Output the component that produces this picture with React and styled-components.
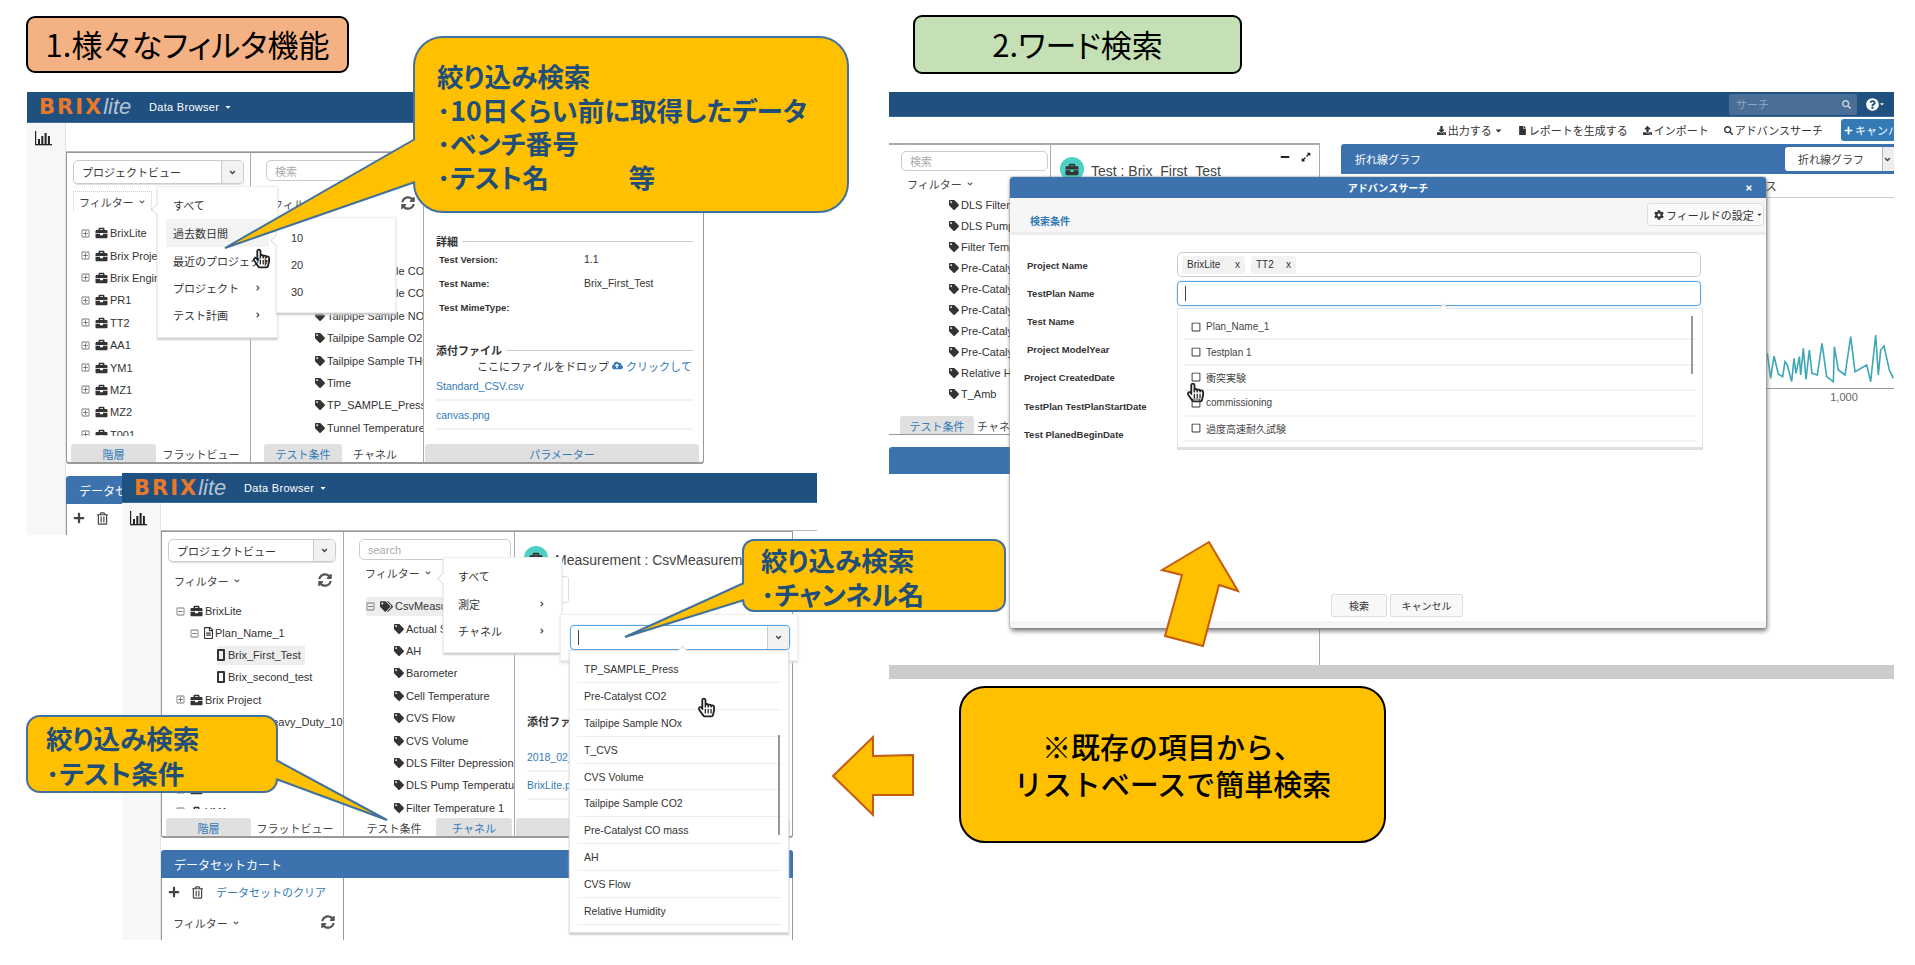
import styled, { createGlobalStyle, css } from "styled-components";
import {
  FaAngleDown,
  FaAngleRight,
  FaBriefcase,
  FaCaretDown,
  FaCloudUploadAlt,
  FaCog,
  FaDownload,
  FaExpandAlt,
  FaFile,
  FaMinus,
  FaPlus,
  FaQuestionCircle,
  FaRegFileAlt,
  FaRegHandPointer,
  FaRegMinusSquare,
  FaRegPlusSquare,
  FaRegSquare,
  FaRegTrashAlt,
  FaSearch,
  FaSyncAlt,
  FaTag,
  FaTags,
  FaTimes,
  FaUpload,
} from "react-icons/fa";

const UI_FONT = `"Liberation Sans", "Noto Sans CJK JP", sans-serif`;
const SLIDE_FONT = `"Noto Sans CJK JP", "Liberation Sans", sans-serif`;

const GlobalStyle = createGlobalStyle`
  html, body { margin: 0; padding: 0; background: #fff; }
  body { font-family: ${UI_FONT}; font-size: 11px; color: #333; }
`;

const place = css`
  position: absolute;
  left: ${(p) => p.$x}px;
  top: ${(p) => p.$y}px;
`;

const Slide = styled.div`
  position: relative;
  width: 1915px;
  height: 965px;
  overflow: hidden;
  background: #fff;
`;

/* slide furniture */
const Caption = styled.div`
  ${place}
  box-sizing: border-box;
  width: ${(p) => p.$w}px;
  height: ${(p) => p.$h}px;
  padding-bottom: 3px;
  display: flex;
  align-items: center;
  justify-content: center;
  background: ${(p) => p.$bg};
  border: 2px solid #000;
  border-radius: 9px;
  color: #000;
  font-family: ${SLIDE_FONT};
  font-feature-settings: "palt";
  font-size: ${(p) => p.$size}px;
`;

const Callout = styled.div`
  ${place}
  box-sizing: border-box;
  width: ${(p) => p.$w}px;
  height: ${(p) => p.$h}px;
  padding: ${(p) => p.$pad};
  background: #ffc000;
  border: 2px solid #41719c;
  border-radius: ${(p) => p.$r}px;
  color: #1f4e79;
  font-family: ${SLIDE_FONT};
  font-feature-settings: "palt";
  font-size: ${(p) => p.$size}px;
  font-weight: 700;
  line-height: ${(p) => p.$lh}px;
  white-space: pre;
`;

const Note = styled.div`
  ${place}
  box-sizing: border-box;
  width: 427px;
  height: 157px;
  display: flex;
  align-items: center;
  justify-content: center;
  background: #ffc000;
  border: 2px solid #000;
  border-radius: 26px;
  color: #000;
  font-family: ${SLIDE_FONT};
  font-size: 29px;
  font-weight: 500;
  line-height: 37px;
  text-align: center;
`;

const Annotations = styled.svg`
  position: absolute;
  left: 0;
  top: 0;
  pointer-events: none;
`;

const Hand = styled(FaRegHandPointer)`
  ${place}
  width: 17px;
  height: 23px;
  color: #222;
  z-index: 5;
`;

/* app window */
const Window = styled.div`
  ${place}
  width: ${(p) => p.$w}px;
  height: ${(p) => p.$h}px;
  background: #fff;
  overflow: hidden;
  isolation: isolate;
  display: flex;
  flex-direction: column;
`;

const TopBar = styled.div`
  flex: none;
  height: ${(p) => p.$h}px;
  box-sizing: border-box;
  display: flex;
  align-items: center;
  padding: 0 12px;
  background: #20507f;
  border-bottom: 1px solid #3a6c9e;
  color: #fff;
`;

const Logo = styled.div`
  display: flex;
  align-items: center;
  width: 110px;
`;

const LogoMark = styled.span`
  color: #e8792b;
  font-family: "DejaVu Sans", sans-serif;
  font-weight: 700;
  font-size: 21px;
  letter-spacing: 2px;
`;

const LogoLite = styled.span`
  color: #b4c2d2;
  font-family: "Liberation Sans", sans-serif;
  font-style: italic;
  font-size: 22px;
`;

const BarMenu = styled.div`
  display: flex;
  align-items: center;
  gap: 5px;
  font-size: 11px;
  letter-spacing: 0.3px;
  svg { width: 8px; height: 8px; }
`;

const Desk = styled.div`
  flex: 1;
  min-height: 0;
  display: flex;
`;

const Gutter = styled.div`
  flex: none;
  width: 39px;
  padding: 7px 0 0 8px;
  box-sizing: border-box;
  background: #f7f7f7;
  border-right: 1px solid #e4e4e4;
`;

const Work = styled.div`
  flex: 1;
  min-width: 0;
`;

const HeadRule = styled.div`
  height: ${(p) => p.$h}px;
  border-bottom: 1px solid #bbb;
`;

const Panel = styled.div`
  box-sizing: border-box;
  width: ${(p) => p.$w}px;
  height: ${(p) => p.$h}px;
  display: flex;
  border: 1px solid #999;
  border-bottom-width: 2px;
  border-radius: 0 0 3px 3px;
`;

const Pane = styled.div`
  box-sizing: border-box;
  flex: ${(p) => (p.$w ? `0 0 ${p.$w}px` : "1")};
  min-width: 0;
  display: flex;
  flex-direction: column;
  border-right: ${(p) => (p.$w ? "1px solid #aaa" : "none")};
`;

const PaneBody = styled.div`
  flex: 1;
  min-height: 0;
  overflow: hidden;
  position: relative;
  padding-top: 7px;
`;

const PaneTabs = styled.div`
  flex: none;
  height: 18px;
  display: flex;
  padding: 0 ${(p) => p.$pad}px;
`;

const Tab = styled.div`
  flex: 0 0 ${(p) => p.$w}px;
  box-sizing: border-box;
  padding-top: 2px;
  display: flex;
  align-items: center;
  justify-content: center;
  border-radius: 3px 3px 0 0;
  font-size: 11px;
  background: ${(p) => (p.$on ? "#e0e0e0" : "transparent")};
  color: ${(p) => (p.$on ? "#337ab7" : "#444")};
`;

const Select = styled.div`
  box-sizing: border-box;
  width: ${(p) => p.$w}px;
  height: ${(p) => p.$h}px;
  margin-left: 6px;
  display: flex;
  align-items: center;
  border: 1px solid #ccc;
  border-radius: 5px;
  padding-left: 8px;
  font-size: 11px;
  box-shadow: 0 1px 1px #ddd;
`;

const SelectLabel = styled.span`
  flex: 1;
`;

const SelectCaret = styled.span`
  flex: 0 0 21px;
  align-self: stretch;
  display: flex;
  align-items: center;
  justify-content: center;
  background: #f2f2f2;
  border-left: 1px solid #ccc;
  border-radius: 0 4px 4px 0;
  color: #444;
`;

const SearchBox = styled.div`
  box-sizing: border-box;
  width: 152px;
  height: 21px;
  margin-left: 15px;
  display: flex;
  align-items: center;
  padding-left: 8px;
  border: 1px solid #ccc;
  border-radius: 5px;
  color: #aaa;
  font-size: 11px;
`;

const FilterRow = styled.div`
  box-sizing: border-box;
  display: flex;
  align-items: center;
  justify-content: space-between;
  height: 20px;
  margin: ${(p) => p.$m};
  font-size: 11px;
  color: #444;
`;

const FilterText = styled.span`
  display: inline-flex;
  align-items: center;
  gap: 4px;
  padding: 0 5px;
  height: 20px;
  box-sizing: border-box;
  width: ${(p) => (p.$open ? "79px" : "auto")};
  border: ${(p) => (p.$open ? "1px dotted #ccc" : "1px solid transparent")};
  border-bottom: none;
  svg { width: 8px; height: 8px; color: #666; }
`;

const Refresh = styled(FaSyncAlt)`
  width: 14px;
  height: 14px;
  color: #555;
`;

const Tree = styled.div`
  margin-top: ${(p) => p.$top}px;
  height: ${(p) => (p.$clip ? `${p.$clip}px` : "auto")};
  flex: ${(p) => (p.$fill ? "1" : "none")};
  overflow: hidden;
`;

const Row = styled.div`
  height: ${(p) => p.$h}px;
  display: flex;
  align-items: center;
  white-space: nowrap;
  padding-left: ${(p) => p.$indent}px;
  font-size: 11px;
  color: #333;
`;

const Node = styled.span`
  display: inline-flex;
  align-items: center;
  gap: ${(p) => p.$gap ?? 3}px;
  height: 19px;
  padding-right: 4px;
  background: ${(p) => (p.$on ? "#eee" : "transparent")};
  svg { flex: none; }
`;

const plusMinus = css`
  width: 9px;
  height: 9px;
  color: #777;
  margin-right: 3px;
  flex: none;
`;
const PlusBox = styled(FaRegPlusSquare)`${plusMinus}`;
const MinusBox = styled(FaRegMinusSquare)`${plusMinus}`;

const Case = styled(FaBriefcase)`
  width: 13px;
  height: 12px;
  color: #333;
`;
const Doc = styled(FaRegFileAlt)`
  width: 9px;
  height: 12px;
  color: #333;
`;
const TagIcon = styled(FaTag)`
  width: 10px;
  height: 10px;
  color: #333;
`;
const TagsIcon = styled(FaTags)`
  width: 13px;
  height: 11px;
  color: #333;
`;
const TestGlyph = styled.span`
  display: inline-block;
  box-sizing: border-box;
  width: 8px;
  height: 12px;
  border: 2px solid #333;
  border-radius: 1px;
`;

/* overlay menus */
const Menu = styled.div`
  ${place}
  box-sizing: border-box;
  width: ${(p) => p.$w}px;
  height: ${(p) => p.$h}px;
  padding: ${(p) => p.$pad}px 8px 0;
  background: #fff;
  border: 1px solid #eee;
  box-shadow: 0 2px 2px #ccc;
  z-index: 3;
  &::before {
    content: "";
    position: absolute;
    left: -5px;
    top: ${(p) => p.$nub}px;
    width: 8px;
    height: 8px;
    background: #fff;
    border-left: 1px solid #ddd;
    border-bottom: 1px solid #ddd;
    transform: rotate(45deg);
  }
`;

const MenuItem = styled.div`
  height: ${(p) => p.$h}px;
  display: flex;
  align-items: center;
  justify-content: space-between;
  padding: 0 7px 0 ${(p) => p.$left ?? 7}px;
  font-size: 11px;
  color: #333;
  white-space: nowrap;
  overflow: hidden;
  background: ${(p) => (p.$on ? "#f3f3f3" : "transparent")};
  svg { width: 8px; height: 8px; color: #555; flex: none; }
`;

/* right detail column */
const Detail = styled.div`
  padding: ${(p) => p.$pad};
`;

const Legend = styled.div`
  display: flex;
  align-items: center;
  gap: 4px;
  font-size: 11px;
  font-weight: 700;
  color: #333;
  margin-top: ${(p) => p.$top ?? 0}px;
  margin-bottom: ${(p) => p.$after ?? 0}px;
  &::after {
    content: "";
    flex: 1;
    height: 1px;
    background: #ccc;
  }
`;

const Field = styled.div`
  display: grid;
  grid-template-columns: 145px 1fr;
  height: 24px;
  margin-left: 3px;
  align-items: center;
  font-size: 9.5px;
  font-weight: 700;
  color: #333;
  span + span { font-weight: 400; font-size: 10.5px; }
`;

const DropHint = styled.div`
  display: flex;
  align-items: center;
  gap: 3px;
  padding-left: 41px;
  height: 15px;
  font-size: 11px;
  white-space: nowrap;
  overflow: hidden;
  a { color: #337ab7; }
  svg { color: #337ab7; width: 11px; height: 11px; }
`;

const FileLink = styled.div`
  height: ${(p) => p.$h ?? 27}px;
  display: flex;
  align-items: center;
  border-bottom: 2px solid #f2f2f2;
  color: #337ab7;
  font-size: 10.5px;
  white-space: nowrap;
  overflow: hidden;
`;

const AvatarFrame = styled.span`
  flex: none;
  width: 24px;
  height: ${(p) => p.$h}px;
  margin-top: ${(p) => p.$top}px;
  overflow: hidden;
`;

const Avatar = styled.span`
  width: 24px;
  height: 24px;
  border-radius: 50%;
  background: #4fd0c7;
  display: flex;
  align-items: center;
  justify-content: center;
  svg { width: 14px; height: 13px; color: #333; }
`;

const TitleRow = styled.div`
  display: flex;
  align-items: flex-start;
  gap: 7px;
  padding-left: ${(p) => p.$pad}px;
  font-size: 14px;
  color: #444;
  white-space: nowrap;
`;

const TitleText = styled.span`
  line-height: 18px;
  margin-top: ${(p) => p.$top}px;
`;

const GhostButton = styled.div`
  position: absolute;
  left: 15px;
  top: 44px;
  width: 37px;
  height: 25px;
  border: 1px solid #ddd;
  border-radius: 3px;
`;

/* cart block under the panel */
const CartHeader = styled.div`
  box-sizing: border-box;
  width: ${(p) => p.$w}px;
  height: ${(p) => p.$h}px;
  margin-top: ${(p) => p.$top}px;
  display: flex;
  align-items: center;
  padding-left: 13px;
  background: #3c72ae;
  border-radius: 3px 3px 0 0;
  color: #fff;
  font-size: 12px;
  white-space: nowrap;
`;

const CartBody = styled.div`
  display: flex;
  width: ${(p) => p.$w}px;
  height: 70px;
  box-sizing: border-box;
  border-left: 1px solid #999;
  border-right: 1px solid #999;
`;

const CartLeft = styled.div`
  flex: 0 0 182px;
  box-sizing: border-box;
  border-right: 1px solid #999;
  padding: 5px 8px 0 6px;
`;

const CartTools = styled.div`
  display: flex;
  align-items: center;
  gap: 12px;
  height: 18px;
  color: #444;
  a { color: #337ab7; font-size: 11px; margin-left: 1px; }
`;

const ToolPlus = styled(FaPlus)`
  width: 12px;
  height: 12px;
`;
const ToolTrash = styled(FaRegTrashAlt)`
  width: 11px;
  height: 13px;
`;

/* channel picker on the second screen */
const PickerFrame = styled.div`
  ${place}
  box-sizing: border-box;
  width: 238px;
  height: 47px;
  padding: 10px 9px 0;
  background: #fff;
  border: 1px solid #eee;
  box-shadow: 0 2px 3px #ddd;
  z-index: 3;
`;

const FocusInput = styled.div`
  box-sizing: border-box;
  width: ${(p) => p.$w}px;
  height: 25px;
  display: flex;
  align-items: center;
  justify-content: space-between;
  border: 1px solid #5aa5dc;
  border-radius: 4px;
  padding-left: 7px;
  box-shadow: 0 0 2px #a8d0ee;
  &::before {
    content: "";
    width: 1px;
    height: 15px;
    background: #444;
  }
`;

const listNub = css`
  &::before {
    content: "";
    position: absolute;
    left: 50%;
    top: -4px;
    width: 6px;
    height: 6px;
    background: #fff;
    border-left: 1px solid #ddd;
    border-top: 1px solid #ddd;
    transform: rotate(45deg);
  }
`;

const PickerList = styled.div`
  ${place}
  box-sizing: border-box;
  width: 220px;
  height: 283px;
  padding: 5px 7px 0;
  background: #fff;
  border: 1px solid #e4e4e4;
  box-shadow: 0 2px 2px #ccc;
  z-index: 4;
  ${listNub}
`;

const PickerItem = styled.div`
  height: 26.9px;
  box-sizing: border-box;
  display: flex;
  align-items: center;
  padding-left: 7px;
  border-bottom: 1px solid #eee;
  font-size: 10.5px;
  color: #333;
`;

const ScrollThumb = styled.div`
  ${place}
  width: ${(p) => p.$wd ?? 2}px;
  height: ${(p) => p.$len}px;
  background: #999;
  z-index: 5;
`;

/* third screen */
const SearchField = styled.div`
  margin-left: auto;
  box-sizing: border-box;
  width: 128px;
  height: 21px;
  display: flex;
  align-items: center;
  justify-content: space-between;
  padding: 0 6px 0 7px;
  background: #4a6f97;
  border-radius: 2px;
  color: #8fa6bf;
  font-size: 11px;
  svg { width: 9px; height: 9px; color: #c8d3de; }
`;

const HelpIcon = styled.span`
  display: flex;
  align-items: center;
  margin: 0 -3px 0 9px;
  color: #fff;
  svg:first-child { width: 13px; height: 13px; }
  svg:last-child { width: 6px; height: 6px; }
`;

const Toolbar = styled.div`
  flex: none;
  height: 26px;
  box-sizing: border-box;
  display: flex;
  align-items: center;
  justify-content: flex-end;
  gap: 15px;
  font-size: 11px;
  color: #333;
`;

const ToolItem = styled.span`
  display: inline-flex;
  align-items: center;
  gap: 2px;
  svg { width: 9px; height: 9px; color: #333; }
`;

const PrimaryButton = styled.span`
  box-sizing: border-box;
  width: 53px;
  height: 22px;
  display: inline-flex;
  align-items: center;
  gap: 2px;
  padding-left: 3px;
  background: #337ab7;
  border-radius: 3px 0 0 3px;
  color: #fff;
  overflow: hidden;
  white-space: nowrap;
  margin-left: 3px;
  svg { width: 9px; height: 9px; flex: none; }
`;

const SplitView = styled.div`
  flex: none;
  height: 522px;
  display: flex;
`;

const LeftArea = styled.div`
  flex: 0 0 430px;
  box-sizing: border-box;
  border-top: 2px solid #aaa;
  border-right: 1px solid #aaa;
`;

const LeftColumns = styled.div`
  display: flex;
  height: 289px;
  border-bottom: 1px solid #999;
`;

const LeftPane = styled.div`
  flex: ${(p) => (p.$w ? `0 0 ${p.$w}px` : "1")};
  min-width: 0;
  box-sizing: border-box;
  display: flex;
  flex-direction: column;
  border-right: ${(p) => (p.$w ? "1px solid #aaa" : "none")};
  position: relative;
`;

const MiniBox = styled(SearchBox)`
  margin-left: 12px;
  width: 147px;
  height: 20px;
  margin-top: 6px;
`;

const PanelControls = styled.div`
  position: absolute;
  right: 8px;
  top: 7px;
  display: flex;
  gap: 11px;
  color: #222;
  svg { width: 10px; height: 10px; }
`;

const RightArea = styled.div`
  flex: 1;
  min-width: 0;
  padding-left: 21px;
  padding-top: 1px;
`;

const GraphHeader = styled.div`
  height: 30px;
  box-sizing: border-box;
  display: flex;
  align-items: center;
  justify-content: space-between;
  padding-left: 14px;
  background: #3c72ae;
  border-radius: 3px 0 0 0;
  color: #fff;
  font-size: 11px;
`;

const GraphSelect = styled.div`
  width: 110px;
  height: 24px;
  box-sizing: border-box;
  display: flex;
  align-items: center;
  margin-right: -1px;
  background: #fff;
  border-radius: 3px 0 0 3px;
  color: #444;
  padding-left: 13px;
  justify-content: space-between;
  span:last-child {
    width: 12px;
    align-self: stretch;
    display: flex;
    align-items: center;
    background: #eee;
    border-left: 1px solid #bbb;
  }
`;

const GraphTabs = styled.div`
  height: 24px;
  box-sizing: border-box;
  border-bottom: 1px solid #ccc;
  padding-left: 424px;
  display: flex;
  align-items: center;
  font-size: 12px;
  color: #444;
`;

const Chart = styled.svg`
  display: block;
  margin-top: 122px;
`;

const Band = styled.div`
  flex: none;
  height: 14px;
  margin-top: 0;
  background: #ccc;
`;

/* modal */
const Modal = styled.div`
  ${place}
  box-sizing: border-box;
  width: 756px;
  height: 451px;
  display: flex;
  flex-direction: column;
  background: #fff;
  border-radius: 3px;
  box-shadow: 0 0 2px #777, 1px 3px 5px #777;
  z-index: 4;
`;

const ModalHead = styled.div`
  flex: none;
  height: 21px;
  position: relative;
  display: flex;
  align-items: center;
  justify-content: center;
  background: #3c72ae;
  border-radius: 3px 3px 0 0;
  color: #fff;
  font-size: 10px;
  font-weight: 700;
  svg {
    position: absolute;
    right: 13px;
    top: 7px;
    width: 8px;
    height: 8px;
  }
`;

const ModalSub = styled.div`
  flex: none;
  height: 37px;
  box-sizing: border-box;
  display: flex;
  justify-content: space-between;
  padding: 5px 2px 0 20px;
  background: #f6f6f6;
  border-bottom: 3px solid #eee;
`;

const SubTab = styled.div`
  align-self: flex-end;
  padding-bottom: 4px;
  color: #337ab7;
  font-size: 10px;
  font-weight: 700;
`;

const SettingsBtn = styled.div`
  box-sizing: border-box;
  width: 117px;
  height: 23px;
  display: flex;
  align-items: center;
  gap: 2px;
  padding-left: 6px;
  background: #fafafa;
  border: 1px solid #ddd;
  border-radius: 3px;
  font-size: 11px;
  white-space: nowrap;
  svg:first-child { width: 10px; height: 10px; }
  svg:last-child { width: 7px; height: 7px; }
`;

const FormGrid = styled.div`
  flex: 1;
  min-height: 0;
  display: grid;
  grid-template-columns: 167px 1fr;
  padding: 17px 0 0 17px;
`;

const FormLabels = styled.div`
  margin-top: -1px;
`;

const FormLabel = styled.div`
  height: 28.2px;
  display: flex;
  align-items: center;
  margin-left: ${(p) => p.$left ?? 0}px;
  font-size: 9.5px;
  font-weight: 700;
  color: #333;
  white-space: nowrap;
`;

const FormFields = styled.div`
  width: 526px;
  margin-left: -17px;
`;

const ChipInput = styled.div`
  box-sizing: border-box;
  width: 524px;
  height: 25px;
  display: flex;
  align-items: center;
  gap: 6px;
  padding-left: 4px;
  border: 1px solid #ccc;
  border-radius: 5px;
  margin-bottom: 4px;
`;

const Chip = styled.span`
  display: inline-flex;
  align-items: center;
  justify-content: space-between;
  box-sizing: border-box;
  width: ${(p) => p.$w}px;
  height: 18px;
  padding: 0 5px;
  background: #f2f2f2;
  border-radius: 3px;
  font-size: 10px;
`;

const OptionList = styled.div`
  position: relative;
  box-sizing: border-box;
  width: 526px;
  height: 142px;
  margin-top: 2px;
  padding: 6px 6px 0;
  border: 1px solid #e6e6e6;
  border-bottom: 3px solid #ddd;
  ${listNub}
`;

const Option = styled.div`
  height: 25.4px;
  box-sizing: border-box;
  display: flex;
  align-items: center;
  gap: 5px;
  padding-left: 7px;
  border-bottom: 2px solid #f3f3f3;
  font-size: 10px;
  color: #444;
  svg { width: 10px; height: 10px; color: #333; }
`;

const ModalButtons = styled.div`
  flex: none;
  display: flex;
  justify-content: flex-start;
  gap: 3px;
  padding-left: 321px;
  margin-bottom: 4px;
`;

const DialogBtn = styled.div`
  box-sizing: border-box;
  width: ${(p) => p.$w}px;
  height: 23px;
  display: flex;
  align-items: center;
  justify-content: center;
  background: #f8f8f8;
  border: 1px solid #ddd;
  border-radius: 2px;
  font-size: 10px;
`;

const ModalFoot = styled.div`
  flex: none;
  height: 7px;
  background: #f5f5f5;
  border-radius: 0 0 3px 3px;
`;

const BarGlyph = () => (
  <svg width="17" height="16" viewBox="0 0 17 16">
    <rect x="0" y="14" width="17" height="1.3" fill="#222" />
    <rect x="0" y="1" width="1.2" height="14" fill="#222" />
    <rect x="3" y="9" width="2" height="5" fill="#222" />
    <rect x="6.3" y="6" width="2" height="8" fill="#222" />
    <rect x="9.6" y="3" width="2" height="11" fill="#222" />
    <rect x="12.9" y="6" width="2" height="8" fill="#222" />
  </svg>
);

const BrixLogo = () => (
  <Logo>
    <LogoMark>BRIX</LogoMark>
    <LogoLite>lite</LogoLite>
  </Logo>
);

const Down = () => <FaAngleDown size={9} />;

const ProjectNode = ({ name, open }) => (
  <Row $h={22.4} $indent={14}>
    <Node $gap={2}>
      {open ? <MinusBox /> : <PlusBox />}
      <Case />
      {name}
    </Node>
  </Row>
);

const ChannelNode = ({ name, indent }) => (
  <Row $h={22.4} $indent={indent}>
    <Node $gap={2}>
      <TagIcon />
      {name}
    </Node>
  </Row>
);

const screen1Projects = ["BrixLite", "Brix Project", "Brix Engine", "PR1", "TT2", "AA1", "YM1", "MZ1", "MZ2", "T001"];
const screen1Channels = [
  "Actual Speed",
  "AH",
  "Tailpipe Sample CO",
  "Tailpipe Sample CO2",
  "Tailpipe Sample NOx",
  "Tailpipe Sample O2",
  "Tailpipe Sample THC",
  "Time",
  "TP_SAMPLE_Press",
  "Tunnel Temperature",
];
const screen2Channels = [
  "Actual Speed",
  "AH",
  "Barometer",
  "Cell Temperature",
  "CVS Flow",
  "CVS Volume",
  "DLS Filter Depression",
  "DLS Pump Temperature",
  "Filter Temperature 1",
];
const pickerItems = [
  "TP_SAMPLE_Press",
  "Pre-Catalyst CO2",
  "Tailpipe Sample NOx",
  "T_CVS",
  "CVS Volume",
  "Tailpipe Sample CO2",
  "Pre-Catalyst CO mass",
  "AH",
  "CVS Flow",
  "Relative Humidity",
];
const screen3Channels = [
  "DLS Filter Depression",
  "DLS Pump Temperature",
  "Filter Temperature 1",
  "Pre-Catalyst CO",
  "Pre-Catalyst CO2",
  "Pre-Catalyst NOx",
  "Pre-Catalyst O2",
  "Pre-Catalyst THC",
  "Relative Humidity",
  "T_Amb",
];
const formLabels = [
  ["Project Name", 0],
  ["TestPlan Name", 0],
  ["Test Name", 0],
  ["Project ModelYear", 0],
  ["Project CreatedDate", -3],
  ["TestPlan TestPlanStartDate", -3],
  ["Test PlanedBeginDate", -3],
];
const planOptions = ["Plan_Name_1", "Testplan 1", "衝突実験", "commissioning", "過度高速耐久試験"];

const chartPoints =
  "112,100 122,175 132,108 145,162 158,170 165,125 172,135 185,185 192,115 198,160 208,110 212,165 220,85 228,178 238,90 246,160 262,165 276,70 290,170 310,185 313,80 325,150 345,165 362,50 375,155 410,135 422,185 437,45 445,165 452,90 462,78 478,150 490,175"
    .split(" ")
    .map((pair) => {
      const [x, y] = pair.split(",").map(Number);
      return `${389 + x / 3},${y / 3}`;
    })
    .join(" ");

const ScreenOne = () => (
  <Window $x={27} $y={92} $w={690} $h={443}>
    <TopBar $h={31}>
      <BrixLogo />
      <BarMenu>
        Data Browser <FaCaretDown />
      </BarMenu>
    </TopBar>
    <Desk>
      <Gutter>
        <BarGlyph />
      </Gutter>
      <Work>
        <HeadRule $h={28} />
        <Panel $w={638} $h={312}>
          <Pane $w={184}>
            <PaneBody>
              <Select $w={171} $h={24}>
                <SelectLabel>プロジェクトビュー</SelectLabel>
                <SelectCaret>
                  <Down />
                </SelectCaret>
              </Select>
              <FilterRow $m="7px 0 0 6px">
                <FilterText $open>
                  フィルター <Down />
                </FilterText>
              </FilterRow>
              <Tree $top={11} $clip={214}>
                {screen1Projects.map((name) => (
                  <ProjectNode key={name} name={name} />
                ))}
              </Tree>
            </PaneBody>
            <PaneTabs $pad={4}>
              <Tab $w={85} $on>
                階層
              </Tab>
              <Tab $w={90}>フラットビュー</Tab>
            </PaneTabs>
          </Pane>
          <Pane $w={173}>
            <PaneBody>
              <SearchBox>検索</SearchBox>
              <FilterRow $m="12px 8px 0 15px">
                <FilterText>
                  フィルター <Down />
                </FilterText>
                <Refresh />
              </FilterRow>
              <Tree $top={2}>
                {screen1Channels.map((name) => (
                  <ChannelNode key={name} name={name} indent={64} />
                ))}
              </Tree>
            </PaneBody>
            <PaneTabs $pad={13}>
              <Tab $w={78} $on>
                テスト条件
              </Tab>
              <Tab $w={66}>チャネル</Tab>
            </PaneTabs>
          </Pane>
          <Pane>
            <PaneBody>
              <Detail $pad="73px 10px 0 12px">
                <Legend $after={-2}>詳細</Legend>
                <Field>
                  <span>Test Version:</span>
                  <span>1.1</span>
                </Field>
                <Field>
                  <span>Test Name:</span>
                  <span>Brix_First_Test</span>
                </Field>
                <Field>
                  <span>Test MimeType:</span>
                </Field>
                <Legend $top={23}>添付ファイル</Legend>
                <DropHint>
                  ここにファイルをドロップ <FaCloudUploadAlt />
                  <a>クリックして</a>
                </DropHint>
                <FileLink $h={26}>Standard_CSV.csv</FileLink>
                <FileLink $h={27}>canvas.png</FileLink>
              </Detail>
            </PaneBody>
            <PaneTabs $pad={1}>
              <Tab $w={274} $on>
                パラメーター
              </Tab>
            </PaneTabs>
          </Pane>
        </Panel>
        <CartHeader $w={640} $h={28} $top={12}>
          データセットカート
        </CartHeader>
        <CartBody $w={640}>
          <CartLeft>
            <CartTools>
              <ToolPlus />
              <ToolTrash />
            </CartTools>
          </CartLeft>
        </CartBody>
      </Work>
    </Desk>
    <Menu $x={130} $y={94} $w={121} $h={152} $pad={4} $nub={18}>
      <MenuItem $h={28}>すべて</MenuItem>
      <MenuItem $h={28} $on>
        過去数日間
      </MenuItem>
      <MenuItem $h={27}>最近のプロジェクト</MenuItem>
      <MenuItem $h={27}>
        プロジェクト <FaAngleRight />
      </MenuItem>
      <MenuItem $h={27}>
        テスト計画 <FaAngleRight />
      </MenuItem>
    </Menu>
    <Menu $x={249} $y={125} $w={120} $h={96} $pad={6} $nub={18}>
      <MenuItem $h={27} $left={6}>
        10
      </MenuItem>
      <MenuItem $h={27} $left={6}>
        20
      </MenuItem>
      <MenuItem $h={27} $left={6}>
        30
      </MenuItem>
    </Menu>
  </Window>
);

const ScreenTwo = () => (
  <Window $x={122} $y={473} $w={695} $h={467}>
    <TopBar $h={30}>
      <BrixLogo />
      <BarMenu>
        Data Browser <FaCaretDown />
      </BarMenu>
    </TopBar>
    <Desk>
      <Gutter>
        <BarGlyph />
      </Gutter>
      <Work>
        <HeadRule $h={27} />
        <Panel $w={632} $h={307}>
          <Pane $w={182}>
            <PaneBody>
              <Select $w={168} $h={23}>
                <SelectLabel>プロジェクトビュー</SelectLabel>
                <SelectCaret>
                  <Down />
                </SelectCaret>
              </Select>
              <FilterRow $m="8px 11px 0 6px">
                <FilterText>
                  フィルター <Down />
                </FilterText>
                <Refresh />
              </FilterRow>
              <Tree $top={10} $clip={209}>
                <ProjectNode name="BrixLite" open />
                <Row $h={22} $indent={28}>
                  <Node $gap={2}>
                    <MinusBox />
                    <Doc />
                    Plan_Name_1
                  </Node>
                </Row>
                <Row $h={22} $indent={55}>
                  <Node $on>
                    <TestGlyph />
                    Brix_First_Test
                  </Node>
                </Row>
                <Row $h={22} $indent={55}>
                  <Node>
                    <TestGlyph />
                    Brix_second_test
                  </Node>
                </Row>
                {["Brix Project", "Brix Engine Heavy_Duty_10", "PR1", "TT2", "AA1", "YM1"].map((name) => (
                  <ProjectNode key={name} name={name} />
                ))}
              </Tree>
            </PaneBody>
            <PaneTabs $pad={4}>
              <Tab $w={85} $on>
                階層
              </Tab>
              <Tab $w={88}>フラットビュー</Tab>
            </PaneTabs>
          </Pane>
          <Pane $w={171}>
            <PaneBody>
              <SearchBox>search</SearchBox>
              <FilterRow $m="2px 8px 0 15px">
                <FilterText>
                  フィルター <Down />
                </FilterText>
              </FilterRow>
              <Tree $top={13}>
                <Row $h={22.4} $indent={22}>
                  <Node $on $gap={2}>
                    <MinusBox />
                    <TagsIcon />
                    CsvMeasurement
                  </Node>
                </Row>
                {screen2Channels.map((name) => (
                  <ChannelNode key={name} name={name} indent={50} />
                ))}
              </Tree>
            </PaneBody>
            <PaneTabs $pad={8}>
              <Tab $w={84}>テスト条件</Tab>
              <Tab $w={76} $on>
                チャネル
              </Tab>
            </PaneTabs>
          </Pane>
          <Pane>
            <PaneBody>
              <GhostButton />
              <TitleRow $pad={9}>
                <AvatarFrame $top={7} $h={13}>
                  <Avatar>
                    <FaBriefcase />
                  </Avatar>
                </AvatarFrame>
                <TitleText $top={12}>Measurement : CsvMeasurement</TitleText>
              </TitleRow>
              <Detail $pad="144px 10px 0 12px">
                <Legend $after={15}>添付ファイル</Legend>
                <FileLink $h={26}>2018_02_data.csv</FileLink>
                <FileLink $h={26}>BrixLite.png</FileLink>
              </Detail>
            </PaneBody>
            <PaneTabs $pad={1}>
              <Tab $w={274} $on />
            </PaneTabs>
          </Pane>
        </Panel>
        <CartHeader $w={632} $h={28} $top={12}>
          データセットカート
        </CartHeader>
        <CartBody $w={632}>
          <CartLeft>
            <CartTools>
              <ToolPlus />
              <ToolTrash />
              <a>データセットのクリア</a>
            </CartTools>
            <FilterRow $m="11px 0 0 -1px">
              <FilterText>
                フィルター <Down />
              </FilterText>
              <Refresh />
            </FilterRow>
          </CartLeft>
        </CartBody>
      </Work>
    </Desk>
    <Menu $x={321} $y={84} $w={119} $h={96} $pad={4} $nub={16}>
      <MenuItem $h={28} $left={6}>
        すべて
      </MenuItem>
      <MenuItem $h={27} $left={6}>
        測定 <FaAngleRight />
      </MenuItem>
      <MenuItem $h={27} $left={6}>
        チャネル <FaAngleRight />
      </MenuItem>
    </Menu>
    <PickerFrame $x={438} $y={141}>
      <FocusInput $w={220}>
        <SelectCaret>
          <Down />
        </SelectCaret>
      </FocusInput>
    </PickerFrame>
    <PickerList $x={447} $y={177}>
      {pickerItems.map((name) => (
        <PickerItem key={name}>{name}</PickerItem>
      ))}
    </PickerList>
    <ScrollThumb $x={656} $y={262} $len={100} />
  </Window>
);

const ScreenThree = () => (
  <Window $x={889} $y={92} $w={1005} $h={587}>
    <TopBar $h={25}>
      <SearchField>
        サーチ <FaSearch />
      </SearchField>
      <HelpIcon>
        <FaQuestionCircle />
        <FaCaretDown />
      </HelpIcon>
    </TopBar>
    <Toolbar>
      <ToolItem>
        <FaDownload />
        出力する
        <FaCaretDown />
      </ToolItem>
      <ToolItem>
        <FaFile />
        レポートを生成する
      </ToolItem>
      <ToolItem>
        <FaUpload />
        インポート
      </ToolItem>
      <ToolItem>
        <FaSearch />
        アドバンスサーチ
      </ToolItem>
      <PrimaryButton>
        <FaPlus />
        キャンバス
      </PrimaryButton>
    </Toolbar>
    <SplitView>
      <LeftArea>
        <LeftColumns>
          <LeftPane $w={162}>
            <MiniBox>検索</MiniBox>
            <FilterRow $m="2px 0 0 12px">
              <FilterText>
                フィルター <Down />
              </FilterText>
            </FilterRow>
            <Tree $top={1} $fill>
              {screen3Channels.map((name) => (
                <Row key={name} $h={21} $indent={60}>
                  <Node $gap={2}>
                    <TagIcon />
                    {name}
                  </Node>
                </Row>
              ))}
            </Tree>
            <PaneTabs $pad={11}>
              <Tab $w={74} $on>
                テスト条件
              </Tab>
              <Tab $w={50}>チャネル</Tab>
            </PaneTabs>
          </LeftPane>
          <LeftPane>
            <PanelControls>
              <FaMinus />
              <FaExpandAlt />
            </PanelControls>
            <TitleRow $pad={9}>
              <AvatarFrame $top={12} $h={24}>
                <Avatar>
                  <FaBriefcase />
                </Avatar>
              </AvatarFrame>
              <TitleText $top={17}>Test : Brix_First_Test</TitleText>
            </TitleRow>
          </LeftPane>
        </LeftColumns>
        <CartHeader $w={430} $h={27} $top={12} />
      </LeftArea>
      <RightArea>
        <GraphHeader>
          折れ線グラフ
          <GraphSelect>
            折れ線グラフ
            <span>
              <Down />
            </span>
          </GraphSelect>
        </GraphHeader>
        <GraphTabs>ス</GraphTabs>
        <Chart width="553" height="90" viewBox="0 0 553 90">
          <polyline points={chartPoints} fill="none" stroke="#3da7b5" strokeWidth="1.6" />
          <line x1="425" y1="68.5" x2="553" y2="68.5" stroke="#999" strokeWidth="1" />
          <text x="503" y="81" fontFamily={UI_FONT} fontSize="11" textAnchor="middle" fill="#666">
            1,000
          </text>
        </Chart>
      </RightArea>
    </SplitView>
    <Band />
    <Modal $x={121} $y={85}>
      <ModalHead>
        アドバンスサーチ
        <FaTimes />
      </ModalHead>
      <ModalSub>
        <SubTab>検索条件</SubTab>
        <SettingsBtn>
          <FaCog />
          フィールドの設定
          <FaCaretDown />
        </SettingsBtn>
      </ModalSub>
      <FormGrid>
        <FormLabels>
          {formLabels.map(([label, left]) => (
            <FormLabel key={label} $left={left}>
              {label}
            </FormLabel>
          ))}
        </FormLabels>
        <FormFields>
          <ChipInput>
            <Chip $w={63}>
              BrixLite <span>x</span>
            </Chip>
            <Chip $w={45}>
              TT2 <span>x</span>
            </Chip>
          </ChipInput>
          <FocusInput $w={524} />
          <OptionList>
            {planOptions.map((name) => (
              <Option key={name}>
                <FaRegSquare />
                {name}
              </Option>
            ))}
            <ScrollThumb $x={513} $y={7} $len={58} />
          </OptionList>
        </FormFields>
      </FormGrid>
      <ModalButtons>
        <DialogBtn $w={56}>検索</DialogBtn>
        <DialogBtn $w={73}>キャンセル</DialogBtn>
      </ModalButtons>
      <ModalFoot />
    </Modal>
  </Window>
);

export default function App() {
  return (
    <Slide>
      <GlobalStyle />
      <Caption $x={26} $y={16} $w={323} $h={57} $bg="#f4b183" $size={31}>
        1.様々なフィルタ機能
      </Caption>
      <Caption $x={913} $y={15} $w={329} $h={59} $bg="#c5e0b4" $size={31}>
        2.ワード検索
      </Caption>
      <ScreenOne />
      <ScreenTwo />
      <ScreenThree />

      <Callout $x={413} $y={36} $w={436} $h={177} $r={30} $size={26.6} $lh={33.5} $pad="21px 0 0 22px">
        {"絞り込み検索\n･10日くらい前に取得したデータ\n･ベンチ番号\n･テスト名　　　等"}
      </Callout>
      <Callout $x={742} $y={539} $w={264} $h={73} $r={12} $size={26.6} $lh={34} $pad="2px 0 0 17px">
        {"絞り込み検索\n･チャンネル名"}
      </Callout>
      <Callout $x={26} $y={715} $w={252} $h={78} $r={14} $size={26.6} $lh={35} $pad="3px 0 0 18px">
        {"絞り込み検索\n･テスト条件"}
      </Callout>
      <Note $x={959} $y={686}>
        ※既存の項目から、
        <br />
        リストベースで簡単検索
      </Note>

      <Hand $x={253} $y={247} />
      <Hand $x={698} $y={696} />
      <Hand $x={1187} $y={381} />

      <Annotations width="1915" height="965" viewBox="0 0 1915 965">
        <path d="M415 139 L225 248 L415 182" fill="#ffc000" stroke="#41719c" strokeWidth="2" />
        <path d="M744 583 L625 637 L744 600" fill="#ffc000" stroke="#41719c" strokeWidth="2" />
        <path d="M276 760 L387 820 L276 779" fill="#ffc000" stroke="#41719c" strokeWidth="2" />
        <polygon
          points="833,776 873,737 873,756 913,755 913,795 873,795 873,815"
          fill="#ffc000"
          stroke="#c55a11"
          strokeWidth="2"
        />
        <polygon
          points="1209,542 1162,570 1182,575 1165,636 1203,646 1219,585 1238,591"
          fill="#ffc000"
          stroke="#c55a11"
          strokeWidth="2"
        />
      </Annotations>
    </Slide>
  );
}
